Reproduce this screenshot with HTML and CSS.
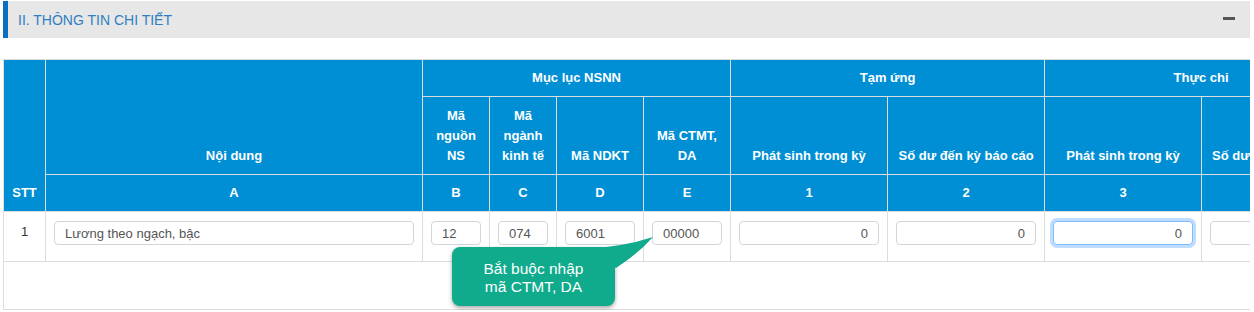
FILE: index.html
```html
<!DOCTYPE html>
<html lang="vi">
<head>
  <meta charset="UTF-8" />
  <title>Thông tin chi tiết</title>
  <link rel="stylesheet" href="styles.css">
</head>
<body>

<div class="panel">
  <!-- Panel heading -->
  <div class="panel-head">
    <span class="panel-title">II. THÔNG TIN CHI TIẾT</span>
    <span class="collapse-btn"></span>
  </div>

  <!-- Detail table -->
  <div class="table-wrap">
    <table class="grid">
      <colgroup>
        <col class="c-stt">
        <col class="c-name">
        <col class="c-code">
        <col class="c-code">
        <col class="c-code2">
        <col class="c-code2">
        <col class="c-num">
        <col class="c-num">
        <col class="c-num">
        <col class="c-num-last">
      </colgroup>
      <thead>
        <tr class="h1">
          <th rowspan="3" class="bottom">STT</th>
          <th rowspan="2" class="bottom">Nội dung</th>
          <th colspan="4">Mục lục NSNN</th>
          <th colspan="2">Tạm ứng</th>
          <th colspan="2">Thực chi</th>
        </tr>
        <tr class="h2">
          <th>Mã nguồn NS</th>
          <th>Mã ngành kinh tế</th>
          <th>Mã NDKT</th>
          <th>Mã CTMT, DA</th>
          <th>Phát sinh trong kỳ</th>
          <th>Số dư đến kỳ báo cáo</th>
          <th>Phát sinh trong kỳ</th>
          <th>Số dư đến kỳ báo cáo</th>
        </tr>
        <tr class="h3">
          <th>A</th>
          <th>B</th>
          <th>C</th>
          <th>D</th>
          <th>E</th>
          <th>1</th>
          <th>2</th>
          <th>3</th>
          <th>4</th>
        </tr>
      </thead>
      <tbody>
        <tr class="data-row">
          <td class="stt">1</td>
          <td><input class="field" type="text" value="Lương theo ngạch, bậc"></td>
          <td><input class="field" type="text" value="12"></td>
          <td><input class="field" type="text" value="074"></td>
          <td><input class="field" type="text" value="6001"></td>
          <td>
            <div class="field-holder">
              <input class="field" type="text" value="00000">
              <div class="hint">
                <svg class="hint-tail" width="90" height="40" viewBox="0 0 90 40">
                  <path d="M10 14 Q50 12 80 2 Q66 18 43 33 Z" fill="#10ab8d"/>
                </svg>
                Bắt buộc nhập<br>mã CTMT, DA
              </div>
            </div>
          </td>
          <td><input class="field num" type="text" value="0"></td>
          <td><input class="field num" type="text" value="0"></td>
          <td><input class="field num focus" type="text" value="0"></td>
          <td><input class="field num" type="text" value="0"></td>
        </tr>
        <tr class="empty-row">
          <td colspan="10"></td>
        </tr>
      </tbody>
    </table>
  </div>
</div>

</body>
</html>
```

FILE: styles.css
```css
body {
  margin: 0;
  padding: 1px 4px 0 3px;
  font-family: "Liberation Sans", Arial, sans-serif;
  color: #333;
  background: #fff;
}

.panel-head {
  display: flex;
  align-items: center;
  justify-content: space-between;
  height: 37px;
  background: #e7e7e7;
  border-left: 5px solid #0b6fbf;
  padding: 0 15px 0 10px;
}

.panel-title {
  font-size: 14px;
  color: #2f7fc2;
}

.collapse-btn {
  width: 12px;
  height: 3px;
  background: #555;
  margin-top: -2px;
}

.table-wrap {
  margin-top: 21px;
  overflow: hidden;
}

.grid {
  border-collapse: collapse;
  table-layout: fixed;
  width: 1354px;
  font-size: 13px;
}

.c-stt { width: 42px; }
.c-name { width: 377px; }
.c-code { width: 67px; }
.c-code2 { width: 87px; }
.c-num { width: 157px; }
.c-num-last { width: 156px; }

.grid th,
.grid td {
  border: 1px solid #dddddd;
  padding: 8px;
  line-height: 20px;
}

.grid th {
  background: #008fd5;
  color: #fff;
  font-weight: bold;
  text-align: center;
  vertical-align: middle;
}

.grid th.bottom,
.grid .h2 th {
  vertical-align: bottom;
}

.grid .h2 th {
  height: 60px;
  padding-top: 9px;
}

.grid td {
  vertical-align: top;
  padding: 9px 8px 16px;
}

.grid td.stt {
  text-align: center;
  padding-top: 10px;
  line-height: 20px;
}

.field {
  display: block;
  box-sizing: border-box;
  width: 100%;
  height: 24px;
  padding: 0 10px;
  border: 1px solid #d2d6dc;
  border-radius: 4px;
  font-family: "Liberation Sans", Arial, sans-serif;
  font-size: 13px;
  color: #555;
  background: #fff;
  outline: none;
}

.field.num {
  text-align: right;
}

.field.focus {
  border-color: #80bdff;
  box-shadow: 0 0 0 3px rgba(0, 123, 255, 0.25);
}

.empty-row td {
  height: 47px;
  padding: 0;
  border-left: 1px solid #dddddd;
  border-right: none;
}

.field-holder {
  position: relative;
}

.hint {
  position: absolute;
  left: -200px;
  top: 26px;
  width: 163px;
  height: 59px;
  box-sizing: border-box;
  padding-top: 13px;
  background: #10ab8d;
  border-radius: 8px;
  box-shadow: 0 2px 4px rgba(0, 0, 0, 0.35);
  color: #fff;
  font-size: 15.5px;
  line-height: 18px;
  text-align: center;
  z-index: 5;
}

.hint-tail {
  position: absolute;
  left: 121px;
  top: -12px;
  overflow: visible;
}
```
